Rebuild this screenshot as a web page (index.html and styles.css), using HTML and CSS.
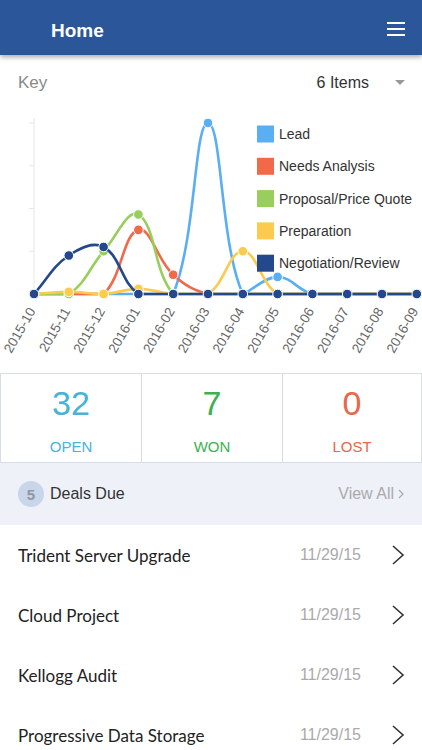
FILE: index.html
```html
<!DOCTYPE html>
<html lang="en">
<head>
  <meta charset="UTF-8">
  <meta name="viewport" content="width=device-width, initial-scale=1.0">
  <title>Home</title>
  <link rel="stylesheet" href="styles.css">
</head>
<body>
  <header class="topbar">
    <h1>Home</h1>
    <svg class="menu" width="18" height="14" viewBox="0 0 18 14">
      <rect x="0" y="0" width="18" height="2" fill="#fff"/>
      <rect x="0" y="6" width="18" height="2" fill="#fff"/>
      <rect x="0" y="12" width="18" height="2" fill="#fff"/>
    </svg>
  </header>

  <div class="key-row">
    <span class="key">Key</span>
    <span class="items">6 Items</span>
    <svg class="caret" width="10" height="6" viewBox="0 0 10 6"><polygon points="0,0 10,0 5,5" fill="#999"/></svg>
  </div>

  <svg id="chart" class="chart" width="422" height="272" viewBox="0 100 422 272"></svg>

  <div class="stats">
    <div class="stat open"><div class="num">32</div><div class="label">OPEN</div></div>
    <div class="stat won"><div class="num">7</div><div class="label">WON</div></div>
    <div class="stat lost"><div class="num">0</div><div class="label">LOST</div></div>
  </div>

  <div class="due-bar">
    <span class="badge">5</span>
    <span class="due-title">Deals Due</span>
    <span class="view-all">View All
      <svg width="6" height="10" viewBox="0 0 6 10"><polyline points="1,1 5,5 1,9" fill="none" stroke="#aaa" stroke-width="1.2"/></svg>
    </span>
  </div>

  <ul class="deals">
    <li><span class="name">Trident Server Upgrade</span><span class="date">11/29/15</span><svg class="chev" width="13" height="20" viewBox="0 0 13 20"><polyline points="1,1 11,10 1,19" fill="none" stroke="#333" stroke-width="1.6"/></svg></li>
    <li><span class="name">Cloud Project</span><span class="date">11/29/15</span><svg class="chev" width="13" height="20" viewBox="0 0 13 20"><polyline points="1,1 11,10 1,19" fill="none" stroke="#333" stroke-width="1.6"/></svg></li>
    <li><span class="name">Kellogg Audit</span><span class="date">11/29/15</span><svg class="chev" width="13" height="20" viewBox="0 0 13 20"><polyline points="1,1 11,10 1,19" fill="none" stroke="#333" stroke-width="1.6"/></svg></li>
    <li><span class="name">Progressive Data Storage</span><span class="date">11/29/15</span><svg class="chev" width="13" height="20" viewBox="0 0 13 20"><polyline points="1,1 11,10 1,19" fill="none" stroke="#333" stroke-width="1.6"/></svg></li>
  </ul>

  <script>
    // Pipeline chart, drawn the way Chart.js 1.x draws a bezier line chart
    const NS = 'http://www.w3.org/2000/svg';
    const chart = document.getElementById('chart');
    const labels = ['2015-10','2015-11','2015-12','2016-01','2016-02','2016-03',
                    '2016-04','2016-05','2016-06','2016-07','2016-08','2016-09'];
    const datasets = [
      { name: 'Lead', color: '#5aaef2', data: [0,0,0,0,0,4,0,0.4,0,0,0,0] },
      { name: 'Needs Analysis', color: '#f2694a', data: [0,0,0,1.5,0.45,0,0,0,0,0,0,0] },
      { name: 'Proposal/Price Quote', color: '#98cf5c', data: [0,0,1.0,1.86,0,0,0,0,0,0,0,0] },
      { name: 'Preparation', color: '#fccb4e', data: [0,0.05,0,0.12,0,0,1.0,0,0,0,0,0] },
      { name: 'Negotiation/Review', color: '#23488c', data: [0,0.9,1.1,0,0,0,0,0,0,0,0,0] }
    ];
    const left = 34, step = 34.8, base = 294, unit = 42.75, tension = 0.4;

    function el(tag, attrs, text) {
      const node = document.createElementNS(NS, tag);
      for (const k in attrs) node.setAttribute(k, attrs[k]);
      if (text) node.textContent = text;
      chart.appendChild(node);
      return node;
    }

    // y axis
    el('line', { x1: left, y1: 118, x2: left, y2: base, stroke: '#e6e6e6', 'stroke-width': 1 });
    for (let t = 1; t <= 4; t++) {
      const y = base - t * unit;
      el('line', { x1: left - 5, y1: y, x2: left, y2: y, stroke: '#e6e6e6', 'stroke-width': 1 });
    }

    // x labels
    labels.forEach((label, i) => {
      const x = left + i * step + 2, y = 311;
      el('text', { x: 0, y: 0, transform: `translate(${x},${y}) rotate(-60)`,
        'text-anchor': 'end', class: 'tick' }, label);
    });

    function spline(a, b, c) {
      const d01 = Math.hypot(b.x - a.x, b.y - a.y);
      const d12 = Math.hypot(c.x - b.x, c.y - b.y);
      const sum = d01 + d12 || 1;
      const fa = tension * d01 / sum, fb = tension * d12 / sum;
      return {
        inner: { x: b.x - fa * (c.x - a.x), y: Math.min(base, b.y - fa * (c.y - a.y)) },
        outer: { x: b.x + fb * (c.x - a.x), y: Math.min(base, b.y + fb * (c.y - a.y)) }
      };
    }

    datasets.forEach(ds => {
      const pts = ds.data.map((v, i) => ({ x: left + i * step, y: base - v * unit }));
      pts.forEach((p, i) => {
        const cp = spline(pts[i - 1] || p, p, pts[i + 1] || p);
        p.inner = cp.inner;
        p.outer = cp.outer;
      });
      let d = `M${pts[0].x},${pts[0].y}`;
      for (let i = 1; i < pts.length; i++) {
        const a = pts[i - 1], b = pts[i];
        d += ` C${a.outer.x},${a.outer.y} ${b.inner.x},${b.inner.y} ${b.x},${b.y}`;
      }
      el('path', { d, fill: 'none', stroke: ds.color, 'stroke-width': 2.6 });
      pts.forEach(p => el('circle', { cx: p.x, cy: p.y, r: 4.8, fill: ds.color, stroke: '#fff', 'stroke-width': 1 }));
    });

    // legend
    datasets.forEach((ds, i) => {
      const y = 134 + i * 32.3;
      el('rect', { x: 257, y: y - 8.5, width: 17, height: 17, fill: ds.color });
      el('text', { x: 279, y: y + 5, class: 'legend' }, ds.name);
    });
  </script>
</body>
</html>
```

FILE: styles.css
```css
body {
  margin: 0;
  font-family: 'Liberation Sans', Arial, sans-serif;
  background: #fff;
  color: #333;
  width: 422px;
  overflow: hidden;
}
.topbar {
  height: 55px;
  background: #2b569a;
  display: flex;
  align-items: center;
  justify-content: space-between;
  padding: 0 17px 0 51px;
  box-shadow: 0 2px 5px rgba(0,0,0,0.35);
  position: relative;
  z-index: 1;
}
.topbar h1 {
  margin: 0;
  color: #fff;
  font-size: 19px;
  font-weight: bold;
  padding-top: 6px;
}
.menu {
  margin-top: 3px;
}
.key-row {
  height: 45px;
  display: flex;
  align-items: center;
  padding: 0 17px 0 18px;
  box-sizing: border-box;
  padding-top: 10px;
}
.key {
  font-size: 17px;
  color: #8a8a8a;
  flex: 1;
}
.items {
  font-size: 16px;
  color: #333;
  margin-right: 26px;
}
.chart {
  display: block;
}
.tick {
  font-size: 13.5px;
  fill: #666;
}
.legend {
  font-size: 14px;
  fill: #333;
}
.stats {
  display: grid;
  grid-template-columns: 142px 141px 1fr;
  border-top: 1px solid #d6dde8;
  border-bottom: 1px solid #d6dde8;
  margin-top: 1px;
}
.stat {
  height: 88px;
  border-right: 1px solid #d6dde8;
  text-align: center;
  box-sizing: border-box;
  padding-top: 10px;
}
.stat:first-child {
  border-left: 1px solid #d6dde8;
}
.num {
  font-size: 34px;
  line-height: 38px;
}
.label {
  font-size: 15px;
  margin-top: 16px;
}
.open { color: #47b3d6; }
.won { color: #3cb150; }
.lost { color: #e8664a; }
.due-bar {
  height: 62px;
  background: #eef1f8;
  display: flex;
  align-items: center;
  padding: 0 18px;
}
.badge {
  width: 26px;
  height: 26px;
  border-radius: 50%;
  background: #c9d5e8;
  color: #8d97a6;
  font-size: 15px;
  font-weight: bold;
  display: flex;
  align-items: center;
  justify-content: center;
  margin-right: 6px;
}
.due-title {
  font-size: 16px;
  color: #333;
  flex: 1;
}
.view-all {
  font-size: 16px;
  color: #aaa;
  display: flex;
  align-items: center;
  gap: 4px;
}
.deals {
  list-style: none;
  margin: 0;
  padding: 0;
}
.deals li {
  height: 60px;
  display: flex;
  align-items: center;
  padding: 0 17px 0 18px;
}
.name {
  flex: 1;
  font-family: Lato, 'Open Sans', sans-serif;
  font-size: 17px;
  color: #222;
}
.date {
  font-size: 16px;
  color: #aaa;
  margin-right: 31px;
}
```
